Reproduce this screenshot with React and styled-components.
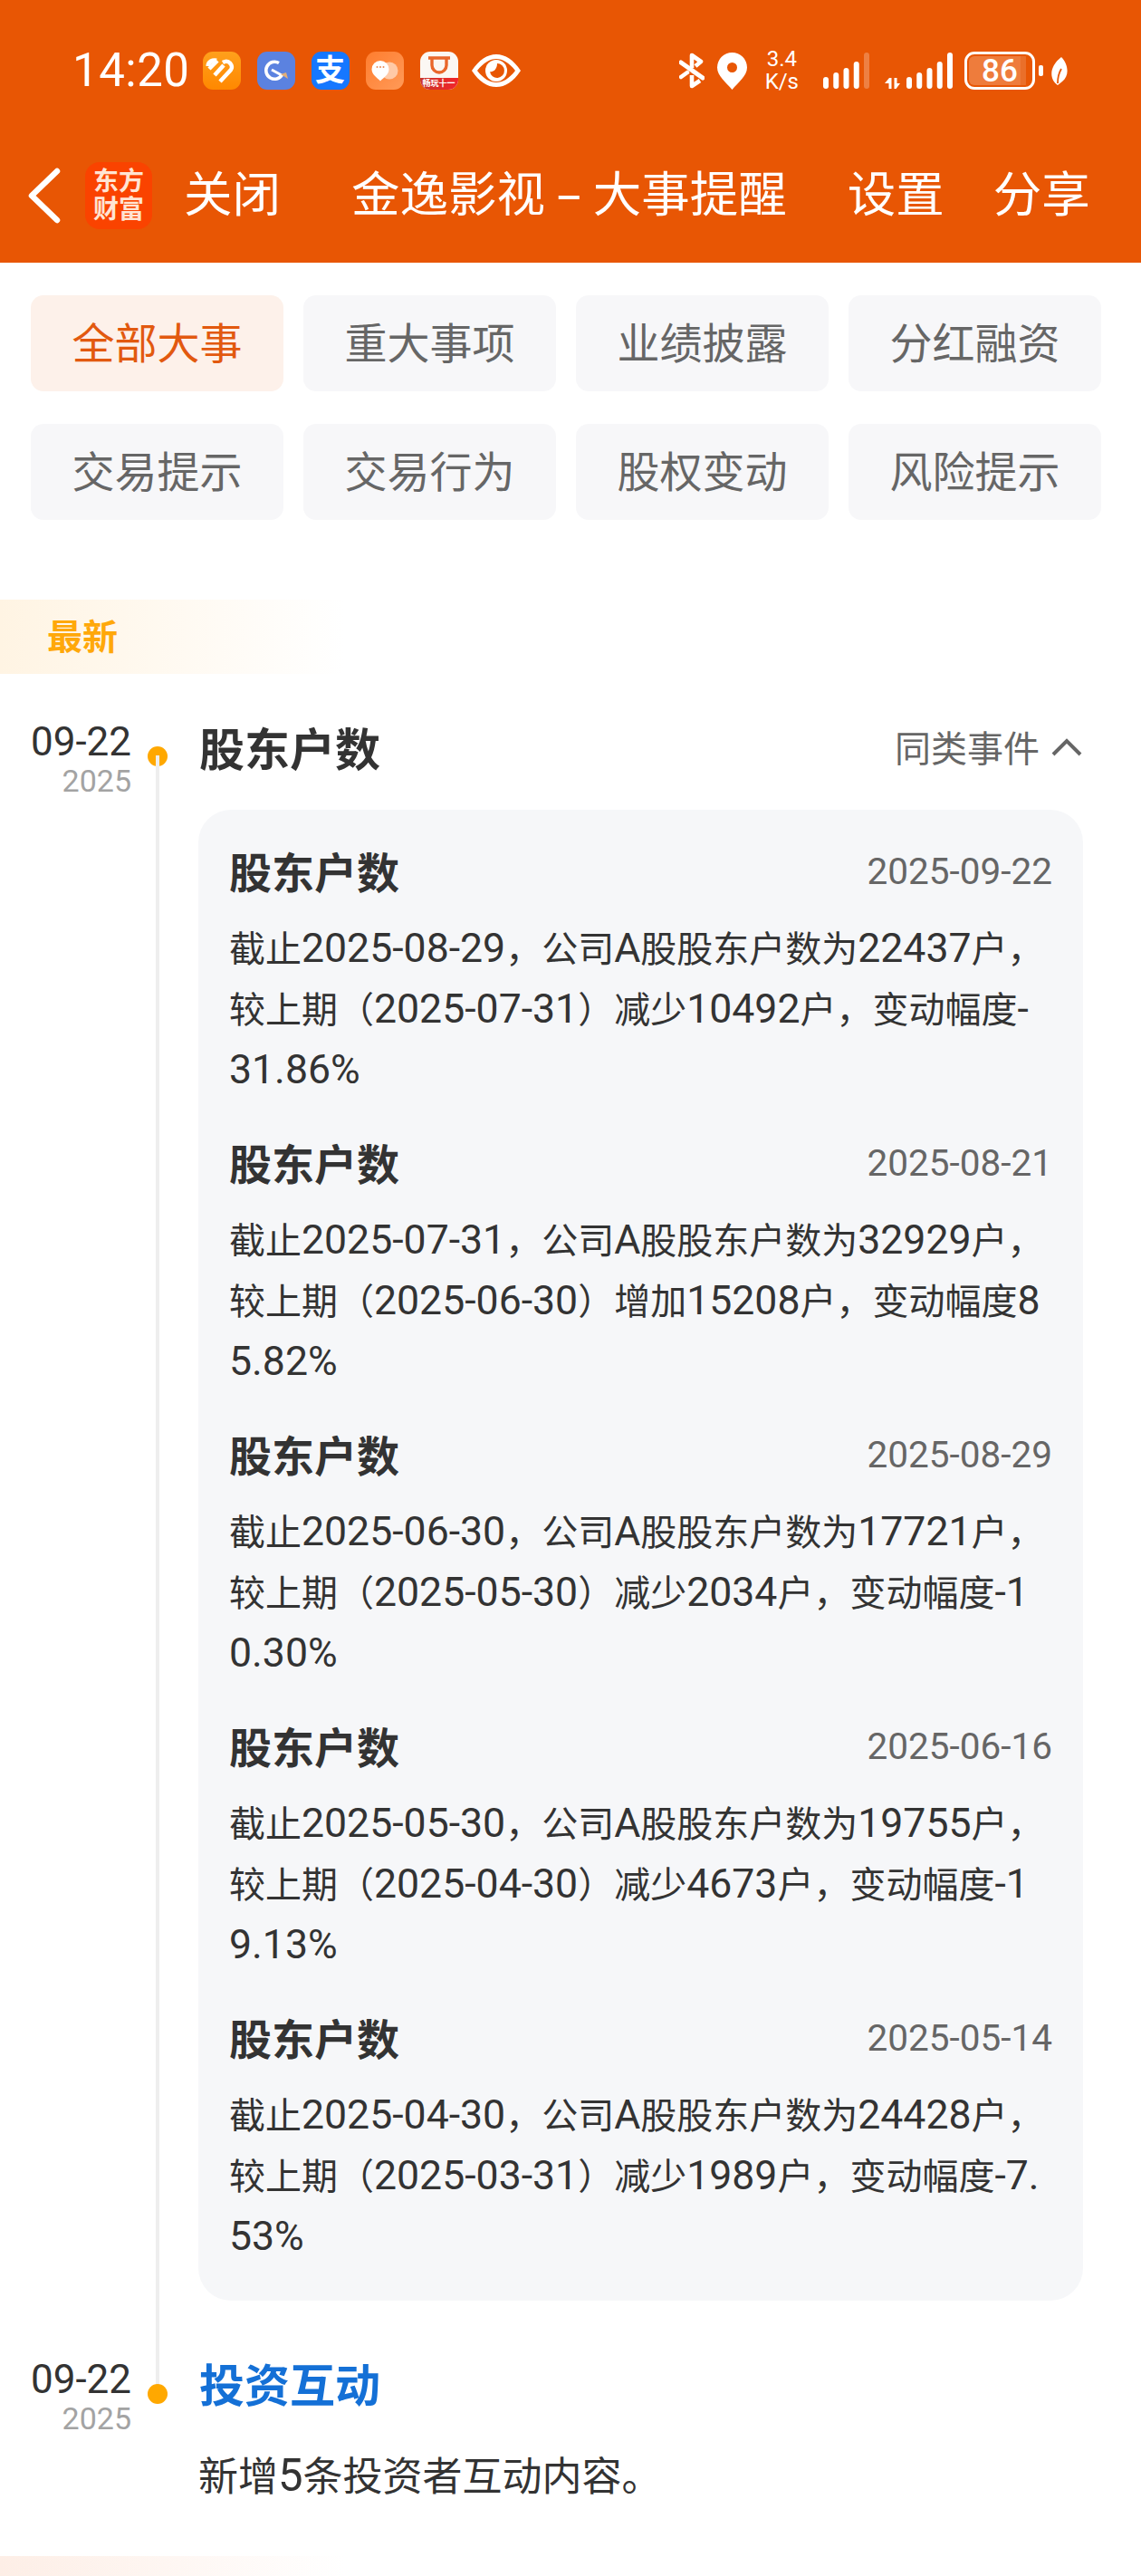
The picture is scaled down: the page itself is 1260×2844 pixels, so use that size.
import React from 'react'
import styled, { createGlobalStyle } from 'styled-components'

const FONT = `Roboto, "Noto Sans CJK SC", sans-serif`

const GlobalStyle = createGlobalStyle`
  html, body {
    margin: 0;
    padding: 0;
    background: #fff;
    font-family: ${FONT};
  }
`

const Page = styled.div`
  width: 1260px;
  height: 2844px;
  overflow: hidden;
  background: #fff;
`

const Header = styled.header`
  height: 290px;
  background: #e85604;
  color: #fff;
  display: flex;
  flex-direction: column;
`

const StatusBar = styled.div`
  height: 156px;
  box-sizing: border-box;
  padding: 0 80px 0 80px;
  display: flex;
  align-items: center;
  justify-content: space-between;
`

const StatusGroup = styled.div`
  display: flex;
  align-items: center;
`

const Spot = styled.span`
  display: flex;
  align-items: center;
  flex: none;
  margin-left: ${(p) => p.$left || 0}px;
`

const Clock = styled.span`
  font-size: 51px;
  line-height: 60px;
  letter-spacing: 0.5px;
`

const AppIcon = styled.span`
  width: 42px;
  height: 42px;
  margin-left: ${(p) => p.$left || 18}px;
  border-radius: 11px;
  background: ${(p) => p.$bg};
  display: flex;
  flex-direction: column;
  align-items: center;
  justify-content: center;
  overflow: hidden;
`

const AlipayGlyph = styled.span`
  font-size: 33px;
  line-height: 36px;
  font-weight: 700;
`

const DidiLabel = styled.span`
  width: 42px;
  height: 13px;
  background: linear-gradient(90deg, #c9352a, #f2252b);
  color: #fff;
  font-size: 9px;
  line-height: 12px;
  font-weight: 700;
  text-align: center;
  white-space: nowrap;
`

const DidiCup = styled.span`
  flex: 1;
  display: flex;
  align-items: center;
  justify-content: center;
`

const Speed = styled.span`
  font-size: 24px;
  line-height: 25px;
  text-align: center;
`

const Battery = styled.span`
  width: 78px;
  height: 42px;
  box-sizing: border-box;
  border: 3px solid #fff;
  border-radius: 11px;
  padding: 2px;
  display: flex;
`

const BatteryFill = styled.span`
  flex: 1;
  border-radius: 6px;
  background: linear-gradient(90deg, #ee7c3c 84%, #ea6f2a 84%, #ea6f2a 93%, transparent 93%);
  font-size: 35px;
  font-weight: 500;
  line-height: 34px;
  text-align: center;
`

const BatteryNub = styled.span`
  width: 5px;
  height: 12px;
  margin-left: 4px;
  border-radius: 2px;
  background: #fff;
`

const NavBar = styled.nav`
  flex: 1;
  display: flex;
  align-items: center;
  padding: 0 0 14px 30px;
`

const BadgeLogo = styled.span`
  width: 74px;
  height: 74px;
  margin-left: 24px;
  border-radius: 16px;
  background: #fa4300;
  font-size: 28px;
  font-weight: 700;
  line-height: 31px;
  text-align: center;
  color: #ffe4d3;
  display: flex;
  align-items: center;
  justify-content: center;
`

const NavText = styled.span`
  font-size: 53.5px;
  line-height: 60px;
  white-space: nowrap;
  margin-left: ${(p) => p.$left}px;
`

const NavDash = styled.span`
  display: inline-block;
  margin: 0 19px;
  transform: scaleX(1.8);
`

const Filters = styled.div`
  display: grid;
  grid-template-columns: repeat(4, 279px);
  grid-auto-rows: 106px;
  column-gap: 22px;
  row-gap: 36px;
  padding: 36px 34px 0;
`

const Chip = styled.div`
  border-radius: 14px;
  font-size: 47px;
  box-sizing: border-box;
  padding-bottom: 7px;
  display: flex;
  align-items: center;
  justify-content: center;
  background: ${(p) => (p.$active ? '#fdf1ea' : '#f7f7f9')};
  color: ${(p) => (p.$active ? '#e2590f' : '#666')};
`

const Band = styled.div`
  height: 82px;
  box-sizing: border-box;
  margin-top: ${(p) => p.$top}px;
  padding: 0 0 6px 52px;
  display: flex;
  align-items: center;
  font-size: 39px;
  font-weight: 700;
  color: ${(p) => p.$color};
  background: linear-gradient(90deg, ${(p) => p.$tint}, #fff 380px);
`

const Event = styled.section`
  display: grid;
  grid-template-columns: 145px 74px 1fr;
  padding-right: 64px;
`

const DateCol = styled.div`
  text-align: right;
  padding-top: ${(p) => p.$top}px;
`

const DayText = styled.div`
  font-size: 44px;
  line-height: 50px;
  color: #333;
`

const YearText = styled.div`
  font-size: 34px;
  line-height: 36px;
  color: #a3a3a3;
`

const Rail = styled.div`
  position: relative;
`

const RailLine = styled.span`
  position: absolute;
  left: 27px;
  top: ${(p) => p.$top}px;
  bottom: ${(p) => p.$bottom}px;
  width: 4px;
  background: #eee;
`

const RailDot = styled.span`
  position: absolute;
  left: 18px;
  top: ${(p) => p.$top}px;
  width: 22px;
  height: 22px;
  border-radius: 50%;
  background: #ffa800;
`

const Body = styled.div`
  min-width: 0;
`

const TitleRow = styled.div`
  display: flex;
  align-items: center;
  justify-content: space-between;
  height: 60px;
  margin-top: ${(p) => p.$top}px;
`

const EventTitle = styled.h2`
  margin: 0;
  padding-left: 1px;
  font-size: 50px;
  font-weight: 700;
  color: ${(p) => p.$color || '#333'};
`

const SameKind = styled.div`
  display: flex;
  align-items: center;
  gap: 12px;
  font-size: 40px;
  color: #666;
`

const Card = styled.div`
  margin-top: 40px;
  background: #f6f7f9;
  border-radius: 36px;
  padding: 31px 34px 36px;
  display: flex;
  flex-direction: column;
  gap: 31px;
`

const ItemHead = styled.div`
  display: flex;
  align-items: center;
  justify-content: space-between;
  height: 70px;
  margin-bottom: 20px;
`

const ItemTitle = styled.h3`
  margin: 0;
  font-size: 47px;
  font-weight: 700;
  color: #333;
`

const ItemDate = styled.span`
  font-size: 40.5px;
  padding-top: 3px;
  color: #666;
`

const Line = styled.div`
  font-size: 40px;
  line-height: 67px;
  color: #333;
  white-space: nowrap;
`

const Num = styled.span`
  font-size: 1.115em;
  line-height: 1;
`

const Note = styled.p`
  margin: 45px 0 0;
  font-size: 44px;
  line-height: 60px;
  color: #333;
`

const chips = ['全部大事', '重大事项', '业绩披露', '分红融资', '交易提示', '交易行为', '股权变动', '风险提示']

const items = [
  {
    date: '2025-09-22',
    lines: ['截止2025-08-29，公司A股股东户数为22437户，', '较上期（2025-07-31）减少10492户，变动幅度-', '31.86%'],
  },
  {
    date: '2025-08-21',
    lines: ['截止2025-07-31，公司A股股东户数为32929户，', '较上期（2025-06-30）增加15208户，变动幅度8', '5.82%'],
  },
  {
    date: '2025-08-29',
    lines: ['截止2025-06-30，公司A股股东户数为17721户，', '较上期（2025-05-30）减少2034户，变动幅度-1', '0.30%'],
  },
  {
    date: '2025-06-16',
    lines: ['截止2025-05-30，公司A股股东户数为19755户，', '较上期（2025-04-30）减少4673户，变动幅度-1', '9.13%'],
  },
  {
    date: '2025-05-14',
    lines: ['截止2025-04-30，公司A股股东户数为24428户，', '较上期（2025-03-31）减少1989户，变动幅度-7.', '53%'],
  },
]

// latin and digits run a little larger than the CJK text, as in the app font
const Mixed = ({ text }) =>
  text.split(/([0-9A-Za-z.%-]+)/).map((part, i) => (i % 2 ? <Num key={i}>{part}</Num> : part))

const barHeights = [13, 18, 23, 30, 40]

const Bars = ({ dim }) => (
  <svg width="51" height="40" viewBox="0 0 51 40" fill="#fff">
    {barHeights.map((h, i) => (
      <rect key={h} x={i * 11.25} y={40 - h} width="6" height={h} rx="3" opacity={dim && i === 4 ? 0.25 : 1} />
    ))}
  </svg>
)

const App = () => {
  return (
    <Page>
      <GlobalStyle />
      <Header>
        <StatusBar>
          <StatusGroup>
            <Clock>14:20</Clock>
            <AppIcon $left={14} $bg="linear-gradient(#ffa01c, #ff8800)">
              <svg width="42" height="42" viewBox="0 0 42 42" fill="none" stroke="#fff" strokeWidth="4.5">
                <path d="M7 19l9-9M13 26l10-11" />
                <path d="M19 33l12-13c3-4-2-12-9-8" strokeLinejoin="round" />
                <path d="M6 16c0-5 5-7 9-6" strokeWidth="5" />
              </svg>
            </AppIcon>
            <AppIcon $bg="#5b82e0">
              <svg width="42" height="42" viewBox="0 0 42 42" fill="none" stroke="#fff" strokeWidth="3.6">
                <path d="M24 12.5a9.5 9.5 0 1 0 3.5 13" />
                <path d="M16 20l11 6" strokeWidth="3" />
                <path d="M26 25l6-2 2 7z" fill="#e2ae78" stroke="none" />
              </svg>
            </AppIcon>
            <AppIcon $bg="#1677ff">
              <AlipayGlyph>支</AlipayGlyph>
            </AppIcon>
            <AppIcon $bg="linear-gradient(135deg, #ff7d2e, #ff9a58)">
              <svg width="42" height="42" viewBox="0 0 42 42">
                <circle cx="26" cy="21" r="9.5" fill="#ffc9a6" />
                <path d="M16 10a9.5 9.5 0 0 1 9.5 9.5c0 6-6 9-9.5 13-3.500-4-9.500-7-9.500-13A9.500 9.500 0 0 1 16 10z" fill="#fff" />
                <g fill="#ea8a55">
                  <circle cx="12.500" cy="17" r="1" />
                  <circle cx="16" cy="17" r="1" />
                  <circle cx="19.500" cy="17" r="1" />
                </g>
              </svg>
            </AppIcon>
            <AppIcon $bg="#fbf7f3">
              <DidiCup>
                <svg width="30" height="26" viewBox="0 0 30 26" fill="none" stroke="#e9672c" strokeWidth="3.4">
                  <path d="M3 5h24M7 5v8a8 8 0 0 0 16 0V5" />
                </svg>
              </DidiCup>
              <DidiLabel>畅玩十一</DidiLabel>
            </AppIcon>
            <Spot $left={15}>
              <svg width="54" height="36" viewBox="0 0 54 36">
                <path fillRule="evenodd" fill="#fff" d="M0 18C8 6 17 0 27 0s19 6 27 18c-8 12-17 18-27 18S8 30 0 18zm6 0c7 9 14 13 21 13s14-4 21-13c-7-9-14-13-21-13S13 9 6 18z" />
                <circle cx="27" cy="18" r="12" fill="#fff" />
                <path d="M28 10a8 8 0 1 1-8 9c3 1 8-2 8-9z" fill="#e85604" />
              </svg>
            </Spot>
          </StatusGroup>
          <StatusGroup>
            <svg width="28" height="40" viewBox="0 0 28 40" fill="none" stroke="#fff" strokeWidth="4.6" strokeLinejoin="round">
              <path d="M2 11l24 17" strokeLinecap="round" strokeWidth="5" />
              <path d="M14 17V3l10 7-6 5" />
              <path d="M14 25v12l9-6" />
              <path d="M2 27l7-5" strokeLinecap="round" />
            </svg>
            <Spot $left={14}>
              <svg width="33" height="41" viewBox="0 0 33 41">
                <path fillRule="evenodd" fill="#fff" d="M16.500 0A16.500 16.500 0 0 1 33 16.500C33 26 23 33 16.500 41 10 33 0 26 0 16.500A16.500 16.500 0 0 1 16.500 0zm0 11a5.500 5.500 0 1 0 0 11 5.500 5.500 0 0 0 0-11z" />
              </svg>
            </Spot>
            <Spot $left={20}>
              <Speed>3.4<br />K/s</Speed>
            </Spot>
            <Spot $left={27}>
              <Bars dim />
            </Spot>
            <Spot $left={17}>
              <svg width="20" height="40" viewBox="0 0 20 40" fill="#fff">
                <path d="M0 34l5-6h2.500v12H4.500v-6zM10.500 28h3v6H17l-4.500 6h-2z" />
              </svg>
              <Spot $left={4}>
                <Bars />
              </Spot>
            </Spot>
            <Spot $left={13}>
              <Battery>
                <BatteryFill>86</BatteryFill>
              </Battery>
            </Spot>
            <BatteryNub />
            <Spot $left={8}>
              <svg width="20" height="31" viewBox="0 0 20 31">
                <path d="M12 0c7 7 10 20 1 27l-5 4C-2 24-1 10 12 0z" fill="#fff" />
                <path d="M8 29c0-6 1-11 4-16" fill="none" stroke="#e85604" strokeWidth="1.800" />
              </svg>
            </Spot>
          </StatusGroup>
        </StatusBar>
        <NavBar>
          <svg width="40" height="64" viewBox="0 0 40 64" fill="none" stroke="#fff" strokeWidth="6.500" strokeLinecap="round" strokeLinejoin="round">
            <path d="M33 5L5 32l28 27" />
          </svg>
          <BadgeLogo>东方<br />财富</BadgeLogo>
          <NavText $left={35}>关闭</NavText>
          <NavText $left={78}>金逸影视<NavDash>-</NavDash>大事提醒</NavText>
          <NavText $left={67}>设置</NavText>
          <NavText $left={54}>分享</NavText>
        </NavBar>
      </Header>

      <Filters>
        {chips.map((c, i) => (
          <Chip key={c} $active={i === 0}>{c}</Chip>
        ))}
      </Filters>

      <Band $top={88} $color="#ffa80a" $tint="#fff4e3">最新</Band>

      <Event>
        <DateCol $top={50}>
          <DayText>09-22</DayText>
          <YearText>2025</YearText>
        </DateCol>
        <Rail>
          <RailDot $top={80} />
          <RailLine $top={90} $bottom={0} />
        </Rail>
        <Body>
          <TitleRow $top={50}>
            <EventTitle>股东户数</EventTitle>
            <SameKind>
              同类事件
              <svg width="36" height="22" viewBox="0 0 36 22" fill="none" stroke="#666" strokeWidth="4">
                <path d="M3 20L18 5l15 15" />
              </svg>
            </SameKind>
          </TitleRow>
          <Card>
            {items.map((item) => (
              <div key={item.date}>
                <ItemHead>
                  <ItemTitle>股东户数</ItemTitle>
                  <ItemDate>{item.date}</ItemDate>
                </ItemHead>
                {item.lines.map((l) => (
                  <Line key={l}><Mixed text={l} /></Line>
                ))}
              </div>
            ))}
          </Card>
        </Body>
      </Event>

      <Event>
        <DateCol $top={62}>
          <DayText>09-22</DayText>
          <YearText>2025</YearText>
        </DateCol>
        <Rail>
          <RailLine $top={0} $bottom={125} />
          <RailDot $top={92} />
        </Rail>
        <Body>
          <TitleRow $top={60}>
            <EventTitle $color="#1470d6">投资互动</EventTitle>
          </TitleRow>
          <Note><Mixed text="新增5条投资者互动内容。" /></Note>
        </Body>
      </Event>

      <Band $top={57} $color="#ea5b12" $tint="#fdeee6">历史</Band>
    </Page>
  )
}

export default App
